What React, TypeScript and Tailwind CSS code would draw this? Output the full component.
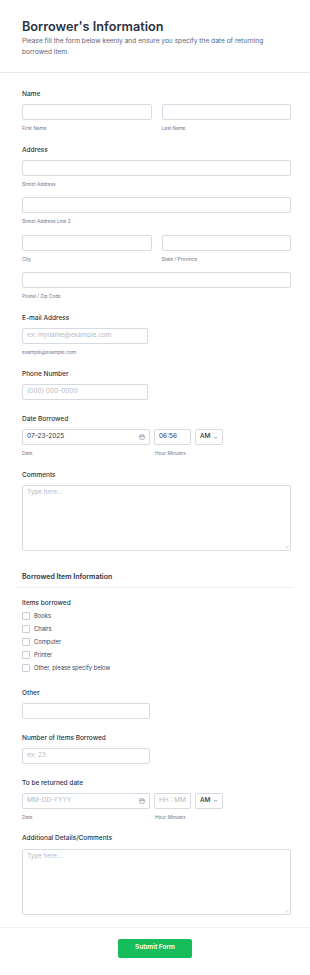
import React from "react";

const font = { fontFamily: "Inter, 'Noto Sans', sans-serif" };

function Label({ children, className = "" }: { children: React.ReactNode; className?: string }) {
  return (
    <div className={`h-[10px] text-[6.5px] leading-[10px] font-medium text-[#2c3345] whitespace-nowrap ${className}`}>
      {children}
    </div>
  );
}

function Sub({ children, className = "" }: { children: React.ReactNode; className?: string }) {
  return (
    <div className={`mt-[3px] h-[10px] text-[4.8px] leading-[10px] text-[#6f7590] whitespace-nowrap ${className}`}>
      {children}
    </div>
  );
}

function Box({ className = "", children }: { className?: string; children?: React.ReactNode }) {
  return (
    <div
      className={`h-[16px] border border-[#d7dae3] rounded-[2px] bg-white flex items-center px-[4px] text-[6.5px] ${className}`}
    >
      {children}
    </div>
  );
}

function Grip() {
  return (
    <svg className="absolute right-[1px] bottom-[1px]" width="4" height="4" viewBox="0 0 4 4">
      <path d="M3.5 0.5 L0.5 3.5 M3.5 2 L2 3.5" stroke="#b5b8c4" strokeWidth="0.5" />
    </svg>
  );
}

function Cal() {
  return (
    <svg width="6" height="6" viewBox="0 0 12 12" fill="none" stroke="#6f7590" strokeWidth="1.1">
      <rect x="1.5" y="2" width="9" height="8.5" rx="1.2" />
      <path d="M1.5 5 H10.5 M4 1 V3 M8 1 V3" />
    </svg>
  );
}

function Chev() {
  return (
    <svg width="5" height="5" viewBox="0 0 10 10" fill="none" stroke="#57647e" strokeWidth="1.3">
      <path d="M2.5 4 L5 6.5 L7.5 4" />
    </svg>
  );
}

function DateRow({ date, time, placeholder }: { date: string; time: string; placeholder: boolean }) {
  const txt = placeholder ? "text-[#b4b9c9]" : "text-[#2c3345]";
  return (
    <div>
      <div className="mt-[5px] flex gap-[4px]">
        <Box className={`w-[128px] justify-between ${txt}`}>
          <span>{date}</span>
          <Cal />
        </Box>
        <Box className={`w-[37px] ${txt}`}>{time}</Box>
        <Box className="w-[28px] justify-between text-[#2c3345] font-medium">
          <span>AM</span>
          <Chev />
        </Box>
      </div>
      <div className="flex gap-[4px]">
        <Sub className="w-[128px]">Date</Sub>
        <Sub className="pl-[1px]">Hour Minutes</Sub>
      </div>
    </div>
  );
}

function Check({ label }: { label: string }) {
  return (
    <div className="h-[13px] flex items-center gap-[4px]">
      <div className="w-[8px] h-[8px] border border-[#c9cdd8] rounded-[1px] bg-white" />
      <span className="text-[5.8px] text-[#3b4257]">{label}</span>
    </div>
  );
}

export default function App() {
  return (
    <div className="w-[310px] h-[975px] bg-white overflow-hidden" style={font}>
      <div className="pt-[18px] pb-[14px] pl-[22px] pr-[19px] border-b border-[#e6e8ee]">
        <div className="h-[18px] text-[12.7px] leading-[18px] font-semibold text-[#2c3345] whitespace-nowrap">
          Borrower's Information
        </div>
        <div className="text-[6.6px] leading-[11px] text-[#57647e]">
          Please fill the form below keenly and ensure you specify the date of returning borrowed item.
        </div>
      </div>

      <div className="pl-[22px] pr-[19px] pt-[16px] pb-[12px]">
        {/* Name */}
        <Label>Name</Label>
        <div className="mt-[5px] grid grid-cols-2 gap-x-[10px]">
          <div>
            <Box />
            <Sub>First Name</Sub>
          </div>
          <div>
            <Box />
            <Sub>Last Name</Sub>
          </div>
        </div>

        {/* Address */}
        <Label className="mt-[12px]">Address</Label>
        <Box className="mt-[5px]" />
        <Sub>Street Address</Sub>
        <Box className="mt-[8px]" />
        <Sub>Street Address Line 2</Sub>
        <div className="mt-[9px] grid grid-cols-2 gap-x-[10px]">
          <div>
            <Box />
            <Sub>City</Sub>
          </div>
          <div>
            <Box />
            <Sub>State / Province</Sub>
          </div>
        </div>
        <Box className="mt-[8px]" />
        <Sub>Postal / Zip Code</Sub>

        {/* Email */}
        <Label className="mt-[12px]">E-mail Address</Label>
        <Box className="mt-[5px] w-[126px] text-[#b4b9c9] text-[6.3px]">ex: myname@example.com</Box>
        <Sub>example@example.com</Sub>

        {/* Phone */}
        <Label className="mt-[12px]">Phone Number</Label>
        <Box className="mt-[5px] w-[126px] text-[#b4b9c9] text-[6.3px]">(000) 000-0000</Box>

        {/* Date Borrowed */}
        <Label className="mt-[14px]">Date Borrowed</Label>
        <DateRow date="07-23-2025" time="06:56" placeholder={false} />

        {/* Comments */}
        <Label className="mt-[12px]">Comments</Label>
        <div className="relative mt-[5px] h-[66px] border border-[#d7dae3] rounded-[2px] px-[4px] pt-[2px] text-[6.3px] text-[#b4b9c9]">
          Type here...
          <Grip />
        </div>

        {/* Section heading */}
        <div className="mt-[20px] h-[12px] text-[7px] leading-[12px] font-semibold text-[#2c3345]">
          Borrowed Item Information
        </div>
        <div className="mt-[4px] ml-[-6px] mr-[-3px] border-b border-[#f0f1f4]" />

        {/* Items borrowed */}
        <Label className="mt-[10px]">Items borrowed</Label>
        <div className="mt-[1.5px]">
          <Check label="Books" />
          <Check label="Chairs" />
          <Check label="Computer" />
          <Check label="Printer" />
          <Check label="Other, please specify below" />
        </div>

        {/* Other */}
        <Label className="mt-[13px]">Other</Label>
        <Box className="mt-[5px] w-[128px]" />

        {/* Number */}
        <Label className="mt-[14px]">Number of Items Borrowed</Label>
        <Box className="mt-[5px] w-[128px] text-[#b4b9c9] text-[6.3px]">ex: 23</Box>

        {/* Return date */}
        <Label className="mt-[14px]">To be returned date</Label>
        <DateRow date="MM-DD-YYYY" time="HH : MM" placeholder={true} />

        {/* Additional */}
        <Label className="mt-[11px]">Additional Details/Comments</Label>
        <div className="relative mt-[6px] h-[66px] border border-[#d7dae3] rounded-[2px] px-[4px] pt-[2px] text-[6.3px] text-[#b4b9c9]">
          Type here...
          <Grip />
        </div>
      </div>

      <div className="border-t border-[#f0f1f4] pt-[11px] flex justify-center">
        <div className="w-[74px] h-[19px] rounded-[2px] bg-[#18bd5b] flex items-center justify-center text-[6.5px] font-semibold text-white">
          Submit Form
        </div>
      </div>
    </div>
  );
}
